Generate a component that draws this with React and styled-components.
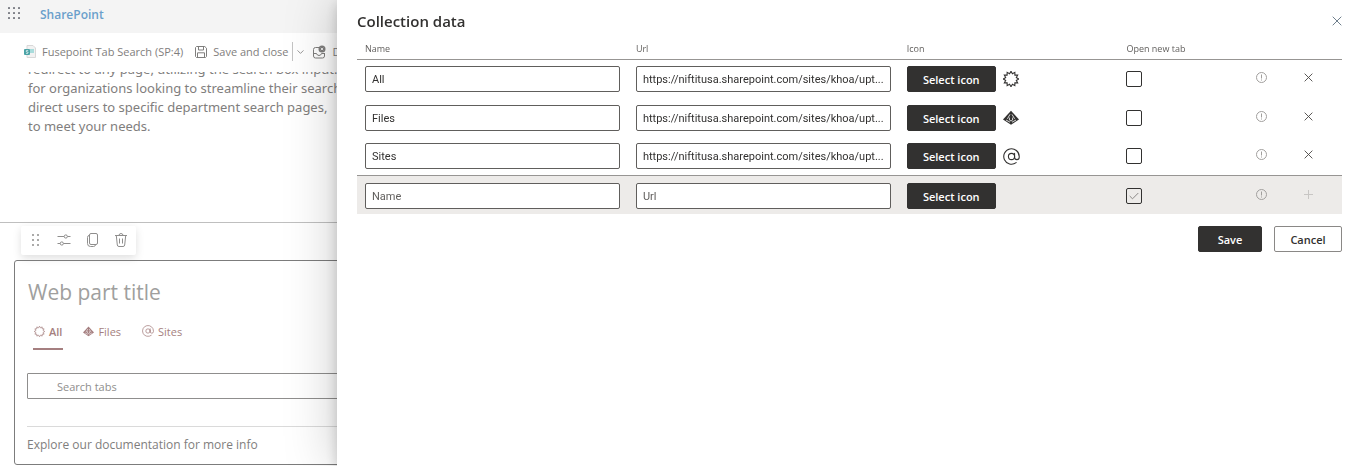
import { useState } from "react";
import styled, { createGlobalStyle } from "styled-components";
import { AtSign } from "lucide-react";

const LINK = "https://niftitusa.sharepoint.com/sites/khoa/upt...";

const star = Array.from({ length: 24 }, (_, i) => {
  const r = i % 2 ? 5.5 : 7.7;
  const a = (i * Math.PI) / 12 - Math.PI / 2;
  return `${(8 + r * Math.cos(a)).toFixed(2)},${(8 + r * Math.sin(a)).toFixed(2)}`;
}).join(" ");

const StarburstIcon = ({ size }) => (
  <svg width={size} height={size} viewBox="0 0 16 16" fill="none" stroke="currentColor">
    <polygon points={star} strokeWidth="1.1" />
  </svg>
);

const PyramidIcon = ({ size }) => (
  <svg width={size} height={size} viewBox="0 0 16 16">
    <path d="M8 0.8 L16 9.6 L8 14.8 L0 9.6Z" fill="currentColor" />
    <path
      d="M7 4.4 L4.4 8.8 M9 4.4 L11.6 8.8 M3 10 L7 12.2 M13 10 L9 12.2 M6.4 7.6 V10 L8 11 L9.6 10 V7.6"
      fill="none"
      stroke="#fff"
      strokeWidth="0.8"
    />
  </svg>
);

const AtIcon = ({ size }) => (
  <AtSign size={size + 1} viewBox="1 1 22 22" strokeWidth={1.4} />
);

const CrossIcon = ({ size }) => (
  <svg width={size} height={size} viewBox="0 0 10 10" stroke="currentColor">
    <path d="M0.7 0.7 L9.3 9.3 M9.3 0.7 L0.7 9.3" />
  </svg>
);

const PlusIcon = () => (
  <svg width="9" height="9" viewBox="0 0 9 9" stroke="currentColor">
    <path d="M4.5 0 V9 M0 4.5 H9" />
  </svg>
);

const InfoIcon = () => (
  <svg width="11" height="11" viewBox="0 0 11 11" fill="none" stroke="currentColor">
    <circle cx="5.5" cy="5.5" r="5" />
    <path d="M5.5 2.5 V6.5 M5.5 7.5 V8.5" />
  </svg>
);

const WaffleIcon = () => (
  <svg width="13" height="13" viewBox="0 0 13 13" fill="#7d7f86">
    {[0, 5, 10].map((y) =>
      [0, 5, 10].map((x) => <rect key={`${x}-${y}`} x={x} y={y} width="2" height="2" rx="0.5" />)
    )}
  </svg>
);

const PageIcon = () => (
  <svg width="12" height="13" viewBox="0 0 12 13">
    <path d="M3 0.5 H9 L11.5 3 V12.5 H3Z" fill="#f2f2f2" stroke="#d8d8d8" />
    <path d="M6 4 H10 V8 H6Z" fill="#a9dcdc" />
    <rect y="4" width="6" height="6" rx="1" fill="#4ba3a6" />
    <path
      d="M4.2 5.7 C3.5 5.2 2.1 5.4 2.2 6.2 C2.3 7 4.1 6.8 4.1 7.7 C4.1 8.6 2.5 8.6 2 8.1"
      fill="none"
      stroke="#fff"
      strokeWidth="0.8"
    />
  </svg>
);

const SaveIcon = () => (
  <svg width="12" height="12" viewBox="0 0 12 12" fill="none" stroke="currentColor">
    <path d="M0.5 1.5 L1.5 0.5 H9.8 L11.5 2.2 V10.5 L10.5 11.5 H1.5 L0.5 10.5Z" />
    <path d="M3.5 0.5 V4 H8.5 V0.5 M2.5 11.5 V6.8 H9.5 V11.5" />
  </svg>
);

const ChevronIcon = () => (
  <svg width="7" height="4" viewBox="0 0 7 4" fill="none" stroke="currentColor" strokeWidth="0.8">
    <path d="M0.5 0.4 L3.5 3.4 L6.5 0.4" />
  </svg>
);

const DiscardIcon = () => (
  <svg width="13" height="14" viewBox="0 0 13 14" fill="none" stroke="currentColor">
    <path d="M6 2.5 H2.5 Q0.5 2.5 0.5 4.5 V11 Q0.5 13 2.5 13 H9.5 Q11.5 13 11.5 11 V8" />
    <path d="M0.5 8.5 H3.5 Q4 10.5 6 10.5 T8.5 8.5 H11.5" />
    <circle cx="9" cy="4" r="3.5" fill="currentColor" stroke="none" />
    <path d="M7.8 2.8 L10.2 5.2 M10.2 2.8 L7.8 5.2" stroke="#fff" strokeWidth="0.8" />
  </svg>
);

const DragIcon = () => (
  <svg width="14" height="14" viewBox="0 0 14 14" fill="currentColor">
    {[1, 6, 11].map((y) =>
      [4, 9].map((x) => <rect key={`${x}-${y}`} x={x} y={y} width="2" height="2" rx="1" />)
    )}
  </svg>
);

const SettingsIcon = () => (
  <svg width="14" height="14" viewBox="0 0 14 14" fill="none" stroke="currentColor">
    <path d="M0.5 3.5 H7 M10.5 3.5 H13.5 M0.5 10.5 H3.2 M6.5 10.5 H13.5" />
    <circle cx="8.8" cy="3.5" r="1.6" />
    <circle cx="4.8" cy="10.5" r="1.6" />
  </svg>
);

const CopyIcon = () => (
  <svg width="14" height="14" viewBox="0 0 14 14" fill="none" stroke="currentColor">
    <rect x="4.5" y="0.5" width="8" height="11" rx="1.5" />
    <path d="M4.5 2.2 Q2.5 2.5 2.5 4.5 V10.5 Q2.5 13.5 5.5 13.5 H8.5 Q10 13.5 10.5 12" />
  </svg>
);

const TrashIcon = () => (
  <svg width="14" height="14" viewBox="0 0 14 14" fill="none" stroke="currentColor">
    <path d="M1 2.5 H13 M5 2.5 Q5 0.5 7 0.5 T9 2.5 M2.3 2.5 L3.3 12 Q3.5 13.5 5 13.5 H9 Q10.5 13.5 10.7 12 L11.7 2.5 M5.5 5.5 V10.5 M8.5 5.5 V10.5" />
  </svg>
);

const tabs = [
  { name: "All", Icon: StarburstIcon },
  { name: "Files", Icon: PyramidIcon },
  { name: "Sites", Icon: AtIcon },
];

const Page = () => (
  <PageLayout>
    <SuiteBar>
      <IconButton aria-label="App launcher">
        <WaffleIcon />
      </IconButton>
      <Brand href="#">SharePoint</Brand>
    </SuiteBar>
    <CommandBar>
      <PageName>
        <PageIcon />
        Fusepoint Tab Search (SP:4)
      </PageName>
      <Command>
        <SaveIcon />
        Save and close
      </Command>
      <SplitButton aria-label="More save options">
        <ChevronIcon />
      </SplitButton>
      <Command>
        <DiscardIcon />
        Draft
      </Command>
    </CommandBar>
    <Canvas>
      <Intro>
        redirect to any page, utilizing the search box input.
        <br />
        for organizations looking to streamline their search,
        <br />
        direct users to specific department search pages,
        <br />
        to meet your needs.
      </Intro>
      <Section>
        <Toolbar>
          <IconButton aria-label="Move web part">
            <DragIcon />
          </IconButton>
          <IconButton aria-label="Edit properties">
            <SettingsIcon />
          </IconButton>
          <IconButton aria-label="Duplicate web part">
            <CopyIcon />
          </IconButton>
          <IconButton aria-label="Delete web part">
            <TrashIcon />
          </IconButton>
        </Toolbar>
        <WebPart>
          <WebPartTitle>Web part title</WebPartTitle>
          <TabList role="tablist">
            {tabs.map(({ name, Icon }, i) => (
              <Tab key={name} role="tab" aria-selected={i === 0} $active={i === 0}>
                <Icon size={11} />
                {name}
              </Tab>
            ))}
          </TabList>
          <SearchInput aria-label="Search tabs" placeholder="Search tabs" />
          <Docs>Explore our documentation for more info</Docs>
        </WebPart>
      </Section>
    </Canvas>
  </PageLayout>
);

const ItemRow = ({ item }) => {
  const { Icon } = item;
  const [name, setName] = useState(item.name);
  const [checked, setChecked] = useState(false);
  return (
    <tr>
      <Cell>
        <TextInput aria-label="Name" value={name} onChange={(e) => setName(e.target.value)} />
      </Cell>
      <Cell>
        <TextInput aria-label="Url" defaultValue={LINK} />
      </Cell>
      <Cell>
        <IconPicker>
          <Button $primary>Select icon</Button>
          <Icon size={16} />
        </IconPicker>
      </Cell>
      <Cell>
        <Checkbox
          type="checkbox"
          aria-label="Open new tab"
          checked={checked}
          onChange={() => setChecked(!checked)}
        />
      </Cell>
      <Cell>
        <RowAction aria-label="Row errors" $color="#a19f9d">
          <InfoIcon />
        </RowAction>
      </Cell>
      <Cell>
        <RowAction aria-label="Delete row" $color="#484644">
          <CrossIcon size={9} />
        </RowAction>
      </Cell>
    </tr>
  );
};

const CollectionPanel = () => (
  <Panel role="dialog" aria-labelledby="panel-title">
    <PanelHeader>
      <PanelTitle id="panel-title">Collection data</PanelTitle>
      <CloseButton aria-label="Close">
        <CrossIcon size={10} />
      </CloseButton>
    </PanelHeader>
    <Table>
      <colgroup>
        <Col $width="27.5%" />
        <Col $width="27.5%" />
        <Col $width="22.3%" />
        <Col $width="auto" />
        <Col $width="47px" />
        <Col $width="56px" />
      </colgroup>
      <thead>
        <tr>
          <HeadCell>Name</HeadCell>
          <HeadCell>Url</HeadCell>
          <HeadCell>Icon</HeadCell>
          <HeadCell>Open new tab</HeadCell>
          <HeadCell />
          <HeadCell />
        </tr>
      </thead>
      <tbody>
        {tabs.map((item) => (
          <ItemRow key={item.name} item={item} />
        ))}
      </tbody>
      <NewItem>
        <tr>
          <Cell>
            <TextInput aria-label="Name" placeholder="Name" />
          </Cell>
          <Cell>
            <TextInput aria-label="Url" placeholder="Url" />
          </Cell>
          <Cell>
            <Button $primary>Select icon</Button>
          </Cell>
          <Cell>
            <CheckHolder>
              <Checkbox type="checkbox" aria-label="Open new tab" />
              <CheckMark viewBox="0 0 10 8">
                <path d="M0.7 4 L3.5 6.8 L9.3 1" />
              </CheckMark>
            </CheckHolder>
          </Cell>
          <Cell>
            <RowAction aria-label="Row errors" $color="#a19f9d">
              <InfoIcon />
            </RowAction>
          </Cell>
          <Cell>
            <RowAction aria-label="Add row" $color="#c8c6c4" disabled>
              <PlusIcon />
            </RowAction>
          </Cell>
        </tr>
      </NewItem>
    </Table>
    <Actions>
      <Button $primary $width="64px">
        Save
      </Button>
      <Button $width="68px">Cancel</Button>
    </Actions>
  </Panel>
);

export default function App() {
  return (
    <>
      <GlobalStyle />
      <Page />
      <CollectionPanel />
    </>
  );
}

const GlobalStyle = createGlobalStyle`
  * {
    box-sizing: border-box;
  }
  body {
    margin: 0;
    overflow: hidden;
    background: #fff;
    font-family: "Open Sans", "Noto Sans", sans-serif;
    font-size: 11px;
  }
  button,
  input {
    font: inherit;
  }
  svg {
    flex-shrink: 0;
  }
`;

const PageLayout = styled.div`
  display: flex;
  flex-direction: column;
  color: #7f7e7d;
`;

const SuiteBar = styled.header`
  display: flex;
  align-items: center;
  gap: 19px;
  height: 33px;
  padding: 0 8px 6px;
  background: #f4f4f4;
`;

const IconButton = styled.button`
  display: flex;
  padding: 0;
  border: 0;
  background: none;
  color: inherit;
  cursor: pointer;
`;

const Brand = styled.a`
  padding-top: 2px;
  color: #6a9fcb;
  font-size: 12px;
  font-weight: 600;
  line-height: 18px;
  text-decoration: none;
`;

const CommandBar = styled.div`
  display: flex;
  align-items: center;
  height: 39px;
  padding: 0 24px 2px;
  white-space: nowrap;
`;

const PageName = styled.div`
  display: flex;
  align-items: center;
  gap: 6px;
  margin-right: 12px;
`;

const Command = styled.button`
  display: flex;
  align-items: center;
  gap: 6px;
  padding: 0;
  border: 0;
  background: none;
  color: inherit;
`;

const SplitButton = styled.button`
  display: flex;
  align-items: center;
  height: 19px;
  margin: 0 9px 0 4px;
  padding: 0 0 0 4px;
  border: 0;
  border-left: 1px solid #c4c4c4;
  background: none;
  color: inherit;
`;

const Canvas = styled.main`
  overflow: hidden;
`;

const Intro = styled.p`
  height: 162px;
  margin: -12px 0 0;
  padding: 0 28px;
  font-family: "Noto Sans", "Open Sans", sans-serif;
  font-size: 13px;
  line-height: 19px;
`;

const Section = styled.section`
  padding: 3px 14px 0;
  border-top: 1px solid #bfbfbf;
`;

const Toolbar = styled.div`
  display: flex;
  align-items: center;
  justify-content: space-between;
  width: 115px;
  height: 29px;
  margin: 0 7px 5px;
  padding: 0 8px 2px 7px;
  border-radius: 2px;
  background: #fff;
  box-shadow: 0 3px 8px rgba(0, 0, 0, 0.13);
  color: #8f8e8d;
`;

const WebPart = styled.article`
  padding: 13px 12px 9px;
  border: 1px solid #7c7c7c;
  border-radius: 3px;
`;

const WebPartTitle = styled.h2`
  margin: 0 0 12px 1px;
  color: #a09f9e;
  font-size: 21px;
  font-weight: 400;
  line-height: 36px;
`;

const TabList = styled.div`
  display: flex;
  gap: 19px;
  margin: 0 6px 23px;
`;

const Tab = styled.button`
  display: flex;
  align-items: center;
  gap: 4px;
  height: 28px;
  padding: 0 1px 8px;
  border: 0;
  border-bottom: 2px solid ${(props) => (props.$active ? "#a57f80" : "transparent")};
  background: none;
  color: #a57f80;
  font-weight: ${(props) => (props.$active ? 600 : 400)};
`;

const SearchInput = styled.input`
  display: block;
  width: 100%;
  height: 26px;
  margin-bottom: 27px;
  padding: 0 29px;
  border: 1px solid #8f8e8d;
  border-radius: 1px;
  &::placeholder {
    color: #8f8e8d;
  }
`;

const Docs = styled.footer`
  padding-top: 8px;
  border-top: 1px solid #dadada;
  font-size: 12px;
  line-height: 20px;
`;

const Panel = styled.div`
  position: fixed;
  top: 0;
  right: 0;
  bottom: 0;
  left: 337px;
  padding: 9px 8px 0 20px;
  background: #fff;
  box-shadow: 0 0 50px rgba(0, 0, 0, 0.22), 0 4px 12px rgba(0, 0, 0, 0.18);
  color: #323130;
`;

const PanelHeader = styled.div`
  display: flex;
  align-items: center;
  justify-content: space-between;
`;

const PanelTitle = styled.h1`
  margin: 0;
  font-size: 15px;
  font-weight: 600;
  line-height: 24px;
`;

const CloseButton = styled(IconButton)`
  color: #6f7f8c;
`;

const Table = styled.table`
  width: 100%;
  table-layout: fixed;
  border-collapse: separate;
  border-spacing: 0;
`;

const Col = styled.col`
  width: ${(props) => props.$width};
`;

const HeadCell = styled.th`
  height: 27px;
  padding: 4px 8px 0;
  border-bottom: 1px solid #979593;
  color: #605e5c;
  font-size: 9px;
  font-weight: 400;
  text-align: left;
`;

const Cell = styled.td`
  padding: 6px 8px;
  vertical-align: top;
  tbody > tr:first-child > & {
    padding-bottom: 7px;
  }
`;

const NewItem = styled.tfoot`
  background: #edebe9;
  ${Cell} {
    padding: 7px 8px 5px;
    border-top: 1px solid #979593;
  }
`;

const TextInput = styled.input`
  display: block;
  width: 100%;
  height: 26px;
  padding: 0 1px 0 6px;
  border: 1px solid #605e5c;
  border-radius: 2px;
  background: #fff;
  color: #323130;
  font-family: Roboto, "Open Sans", sans-serif;
  text-overflow: ellipsis;
  &::placeholder {
    color: #605e5c;
  }
`;

const IconPicker = styled.div`
  display: flex;
  align-items: center;
  gap: 7px;
`;

const Button = styled.button`
  width: ${(props) => props.$width || "89px"};
  height: 26px;
  padding: 0;
  border: 1px solid ${(props) => (props.$primary ? "#323130" : "#8a8886")};
  border-radius: 2px;
  background: ${(props) => (props.$primary ? "#323130" : "#fff")};
  color: ${(props) => (props.$primary ? "#fff" : "#323130")};
  font-weight: 600;
  cursor: pointer;
`;

const Checkbox = styled.input`
  display: block;
  width: 16px;
  height: 16px;
  margin: 5px 0;
  border: 1px solid #323130;
  border-radius: 2px;
  appearance: none;
  &:checked {
    background: #323130;
  }
`;

const CheckHolder = styled.div`
  position: relative;
  width: 16px;
`;

// hint mark shown inside the unchecked box of the new row
const CheckMark = styled.svg`
  position: absolute;
  top: 4px;
  left: 3px;
  width: 10px;
  height: 8px;
  fill: none;
  stroke: #8a8886;
  pointer-events: none;
`;

const RowAction = styled.button`
  display: flex;
  align-items: center;
  justify-content: center;
  width: 28px;
  height: 22px;
  padding: 0;
  border: 0;
  background: none;
  color: ${(props) => props.$color};
`;

const Actions = styled.div`
  display: flex;
  justify-content: flex-end;
  gap: 12px;
  padding-top: 12px;
`;
